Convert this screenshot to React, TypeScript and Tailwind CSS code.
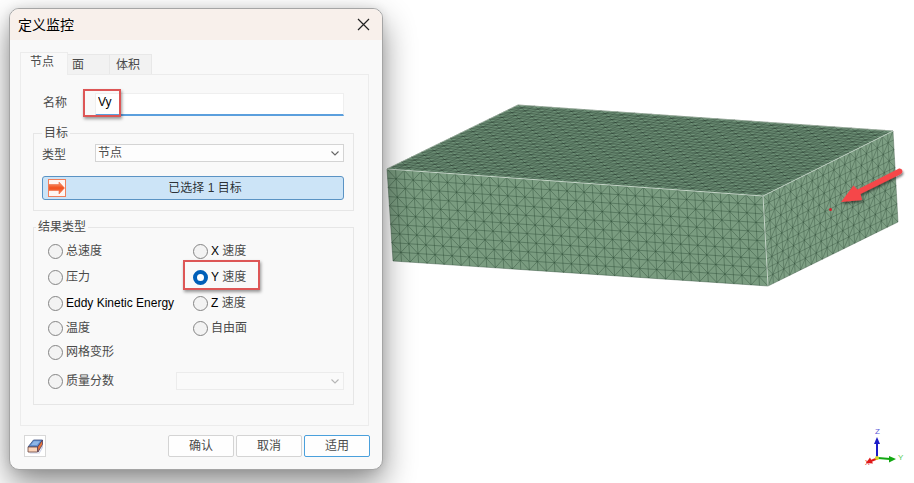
import type { ReactNode } from "react";

type Point = [number, number];

const lerp = (a: Point, b: Point, t: number): Point => [
  a[0] + (b[0] - a[0]) * t,
  a[1] + (b[1] - a[1]) * t,
];

// corners of the meshed block
const A: Point = [387, 169];
const B: Point = [518, 105];
const C: Point = [893, 131];
const D: Point = [763, 196];
const E: Point = [393, 261];
const F: Point = [768, 286];
const G: Point = [898, 222];

// grid lines plus alternating diagonals over a four-sided face
const meshPaths = (tl: Point, tr: Point, br: Point, bl: Point, cols: number, rows: number) => {
  const at = (i: number, j: number) => {
    const p = lerp(lerp(tl, tr, i / cols), lerp(bl, br, i / cols), j / rows);
    return `${p[0].toFixed(1)} ${p[1].toFixed(1)}`;
  };
  let grid = "";
  let diagonals = "";
  for (let i = 0; i <= cols; i++) grid += `M${at(i, 0)}L${at(i, rows)}`;
  for (let j = 0; j <= rows; j++) grid += `M${at(0, j)}L${at(cols, j)}`;
  for (let i = 0; i < cols; i++) {
    for (let j = 0; j < rows; j++) {
      diagonals += (i + j) % 2 === 0 ? `M${at(i, j)}L${at(i + 1, j + 1)}` : `M${at(i + 1, j)}L${at(i, j + 1)}`;
    }
  }
  return { grid, diagonals };
};

const poly = (...points: Point[]) => points.map((p) => p.join(",")).join(" ");

const faces = [
  { corners: poly(A, B, C, D), fill: "#6f9278", line: "#1b2c20", opacity: 0.5, ...meshPaths(B, C, D, A, 45, 27) },
  { corners: poly(A, D, F, E), fill: "#7a9c80", line: "#2c4a34", opacity: 0.7, ...meshPaths(A, D, F, E, 44, 10) },
  { corners: poly(D, C, G, F), fill: "#7e9f84", line: "#2c4a34", opacity: 0.6, ...meshPaths(D, C, G, F, 24, 10) },
];

const tabs = [
  { label: "节点", active: true },
  { label: "面", active: false },
  { label: "体积", active: false },
];

const results = [
  { id: "total", label: "总速度" },
  { id: "vx", axis: "X", label: " 速度" },
  { id: "pressure", label: "压力" },
  { id: "vy", axis: "Y", label: " 速度", marked: true },
  { id: "eddy", axis: "Eddy Kinetic Energy" },
  { id: "vz", axis: "Z", label: " 速度" },
  { id: "temperature", label: "温度" },
  { id: "free", label: "自由面" },
  { id: "mesh", label: "网格变形" },
];

const Mark = ({ className }: { className: string }) => (
  <span
    className={`pointer-events-none absolute border-2 border-[#dd5656] shadow-[1px_2px_3px_rgba(0,0,0,0.4)] ${className}`}
  />
);

const Radio = ({ id, axis, label, checked }: { id: string; axis?: string; label?: string; checked?: boolean }) => (
  <label className="flex items-center whitespace-pre">
    <input
      type="radio"
      name="result"
      value={id}
      defaultChecked={checked}
      className="mr-[3px] size-[15px] shrink-0 appearance-none rounded-full border border-[#858585] bg-[#f3f3f3] checked:border-4 checked:border-[#005fb8] checked:bg-white"
    />
    {axis && <span className="text-black">{axis}</span>}
    {label}
  </label>
);

const Dropdown = ({ id, disabled, children }: { id: string; disabled?: boolean; children?: ReactNode }) => (
  <div className="relative flex-1">
    <select
      id={id}
      disabled={disabled}
      aria-label={disabled ? "质量分数" : undefined}
      className="block h-[18px] w-full appearance-none border border-[#d4d4d4] bg-[#fdfdfd] px-[2px] leading-4 disabled:border-[#ececec] disabled:bg-[#fafafa]"
    >
      {children}
    </select>
    <svg
      viewBox="0 0 10 10"
      className={`pointer-events-none absolute top-1 right-1 size-[10px] ${disabled ? "text-[#b5b5b5]" : "text-[#666]"}`}
    >
      <path d="M1.500 3.500L5 7l3.500-3.500" fill="none" stroke="currentColor" strokeWidth="1.100" />
    </svg>
  </div>
);

const ArrowIcon = () => (
  <svg viewBox="0 0 18 18" className="absolute left-[5px] size-[18px]">
    <defs>
      <linearGradient id="arrow" x1="0" y1="0" x2="0" y2="1">
        <stop offset="0" stopColor="#f9a27c" />
        <stop offset="0.5" stopColor="#f2501d" />
        <stop offset="1" stopColor="#f78a62" />
      </linearGradient>
    </defs>
    <rect x="0.5" y="0.5" width="17" height="17" fill="#fff6f2" stroke="#f0805c" />
    <path d="M1 5.500h10V3L16.500 9 11 15v-3.500H1z" fill="url(#arrow)" stroke="#ef6a3f" strokeWidth="0.600" />
  </svg>
);

const EraserIcon = () => (
  <svg viewBox="0 0 18 18" className="size-[18px]">
    <path d="M3 15.500h10l4-8v3l-3.500 6H4z" fill="#b9bfdd" opacity="0.700" />
    <path d="M7.500 3h9L12 10H2z" fill="#5f8fd0" stroke="#3c4f7d" strokeWidth="0.800" strokeLinejoin="round" />
    <path d="M8 4.200h6L11 8H5z" fill="#8fb6e6" />
    <path d="M2 10h9.500v5H2z" fill="#fbd3b8" stroke="#6b4440" strokeWidth="0.800" strokeLinejoin="round" />
    <path d="M11.500 10l5-7v4.500L12 15z" fill="#e5733a" stroke="#4b3c5e" strokeWidth="0.800" strokeLinejoin="round" />
  </svg>
);

const MonitorDialog = () => (
  <div
    role="dialog"
    aria-labelledby="dialog-title"
    className="relative z-10 flex w-[374px] shrink-0 flex-col rounded-[10px] border border-[#a5a5a5] bg-[#f9f9f9] shadow-[0_14px_32px_rgba(0,0,0,0.45),0_0_10px_rgba(0,0,0,0.1)]"
  >
    <header className="flex h-[31px] items-center justify-between rounded-t-[9px] bg-[#f8f0eb] pr-3 pl-2 text-black">
      <h1 id="dialog-title" className="text-sm">定义监控</h1>
      <button type="button" aria-label="关闭">
        <svg viewBox="0 0 13 13" className="size-[13px]">
          <path d="M1 1l11 11M12 1L1 12" stroke="#222" strokeWidth="1.200" />
        </svg>
      </button>
    </header>

    <div className="pt-3 pr-[13px] pl-[10px]">
      <div role="tablist" className="flex items-end">
        {tabs.map((tab) => (
          <button
            key={tab.label}
            type="button"
            role="tab"
            aria-selected={tab.active}
            className={
              tab.active
                ? "relative -mb-px h-[23px] w-12 border border-b-0 border-[#ececec] bg-[#f9f9f9] pr-1 pb-1"
                : "h-5 w-[42px] border border-b-0 border-l-0 border-[#e8e8e8] bg-[#f2f2f2] px-1 text-left last:px-[6px]"
            }
          >
            {tab.label}
          </button>
        ))}
      </div>

      <div className="border border-[#ececec] px-3 pt-[18px] pb-5 pr-[14px]">
        <div className="flex items-center pr-[10px] pl-[10px]">
          <label htmlFor="name" className="w-[52px] pb-1">名称</label>
          <div className="relative flex-1">
            <input
              id="name"
              defaultValue="Vy"
              className="block h-[23px] w-full border border-b-2 border-[#efefef] border-b-[#5b9fdd] bg-white px-[2px] pb-1 text-black outline-none"
            />
            <Mark className="-top-1 -left-3 h-7 w-[38px]" />
          </div>
        </div>

        <fieldset className="mt-2 border border-[#e6e6e6] pr-[9px] pb-[10px] pl-2">
          <legend className="px-[2px] leading-[18px]">目标</legend>
          <div className="mt-px flex items-center">
            <label htmlFor="kind" className="w-[53px] pt-1">类型</label>
            <Dropdown id="kind">
              <option>节点</option>
            </Dropdown>
          </div>
          <button
            type="button"
            className="relative mt-[13px] flex h-6 w-full items-center justify-center rounded-[3px] border border-[#5a93c4] bg-[#cce4f7] pl-6 whitespace-pre text-black/80"
          >
            <ArrowIcon />
            已选择 1 目标
          </button>
        </fieldset>

        <fieldset className="mt-[7px] border border-[#e6e6e6] pr-[9px] pb-[14px] pl-[14px]">
          <legend className="-ml-3 px-[2px] leading-[18px]">结果类型</legend>
          <div className="mt-[2px] grid grid-cols-[145px_1fr] grid-rows-[26px_26px_26px_24px_24px]">
            {results.map((r) => (
              <div key={r.id} className="relative flex items-center">
                <Radio id={r.id} axis={r.axis} label={r.label} checked={r.marked} />
                {r.marked && <Mark className="-top-1 -left-[10px] h-[30px] w-[77px]" />}
              </div>
            ))}
          </div>
          <div className="mt-2 flex items-center">
            <div className="w-[128px]">
              <Radio id="mass" label="质量分数" />
            </div>
            <Dropdown id="mass-list" disabled />
          </div>
        </fieldset>
      </div>
    </div>

    <footer className="mt-[9px] flex items-center gap-[2px] pr-3 pb-3 pl-[14px]">
      <button
        type="button"
        aria-label="清除"
        className="mr-auto flex size-[22px] items-center justify-center border border-[#d8d8d8] bg-white"
      >
        <EraserIcon />
      </button>
      <button type="button" className="h-[22px] w-[66px] rounded-[2px] border border-[#d4d4d4] bg-[#fefefe]">确认</button>
      <button type="button" className="h-[22px] w-[66px] rounded-[2px] border border-[#d4d4d4] bg-[#fefefe]">取消</button>
      <button type="button" className="h-[22px] w-[66px] rounded-[2px] border border-[#4aa0dc] bg-[#fefefe]">适用</button>
    </footer>
  </div>
);

const Block = () => (
  <svg viewBox="383 95 531 200" className="w-full" role="img" aria-label="网格">
    <defs>
      <filter id="drop" x="-20%" y="-20%" width="140%" height="160%">
        <feDropShadow dx="1" dy="2" stdDeviation="1.2" floodColor="#000" floodOpacity="0.5" />
      </filter>
    </defs>
    {faces.map((face) => (
      <g key={face.corners} fill="none" stroke={face.line} strokeWidth="0.600">
        <polygon points={face.corners} fill={face.fill} stroke="none" />
        <path d={face.grid} strokeOpacity={face.opacity} />
        <path d={face.diagonals} strokeOpacity={face.opacity} />
      </g>
    ))}
    <polyline points={poly(A, D, C)} fill="none" stroke="#c5d6c8" strokeWidth="1" />
    <polyline points={poly(D, F)} fill="none" stroke="#c5d6c8" strokeWidth="1" />
    <polyline points={poly(A, B, C)} fill="none" stroke="#9db3a1" strokeWidth="0.700" />
    <circle cx="830.500" cy="209.500" r="1.500" fill="#d3202b" />
    <path
      d="M899 168.500Q902 168 902.500 171Q902.500 173.500 900 174.500L860.500 194 862 200 841 202 853.500 185.500 857.500 189.500Z"
      fill="#f5464a"
      filter="url(#drop)"
    />
  </svg>
);

const Triad = () => (
  <svg
    viewBox="862 426 44 42"
    className="mt-auto mr-2 mb-[15px] h-[42px] w-11 self-end font-['Liberation_Sans',sans-serif]"
    role="img"
    aria-label="坐标轴"
  >
    <path d="M877 457V441" stroke="#1c1cc8" strokeWidth="2" />
    <path d="M877 437l3 7h-6z" fill="#1c1cc8" />
    <path d="M878 458l12 1" stroke="#12a812" strokeWidth="2" />
    <path d="M896 459l-7 3.500v-6.500z" fill="#12a812" />
    <path d="M877 458.500l-6 2.500" stroke="#e01818" strokeWidth="2" />
    <path d="M866 463l4-5.500 3 6z" fill="#e01818" />
    <circle cx="877" cy="458" r="2" fill="#d6d62a" />
    <text x="875" y="434" fontSize="8" fill="#5b5bd6">Z</text>
    <text x="898" y="460" fontSize="8" fill="#55cc55">Y</text>
    <text x="865" y="465" fontSize="7" fill="#e01818">X</text>
  </svg>
);

const App = () => {
  return (
    <main className="flex min-h-screen items-start overflow-hidden bg-white pt-2 pl-[9px] font-['Liberation_Sans','Noto_Sans_CJK_SC',sans-serif] text-xs text-[#4a4a4a]">
      <MonitorDialog />
      <section className="flex min-w-0 flex-1 flex-col self-stretch pt-[87px]">
        <Block />
        <Triad />
      </section>
    </main>
  );
};

export default App;
